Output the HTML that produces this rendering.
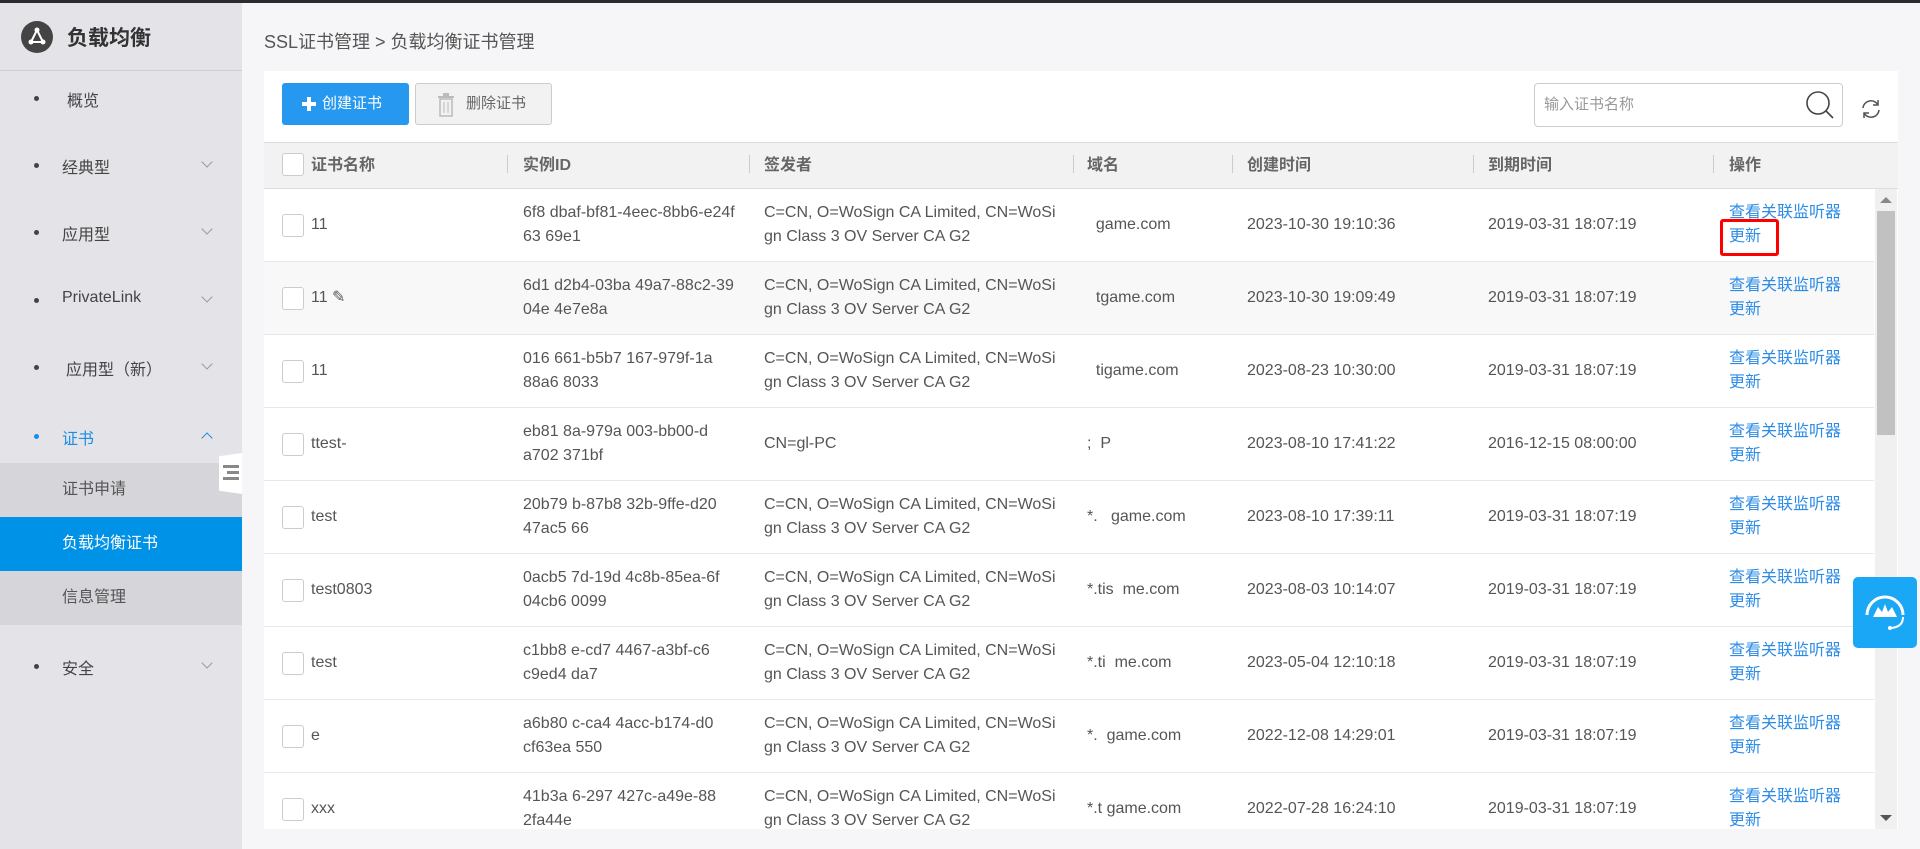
<!DOCTYPE html>
<html><head><meta charset="utf-8"><style>
*{margin:0;padding:0;box-sizing:border-box}
body{width:1920px;height:849px;overflow:hidden;background:#f6f6f8;font-family:"Liberation Sans","Noto Sans CJK SC",sans-serif;color:#555;position:relative}
.topbar{position:absolute;left:0;top:0;width:1920px;height:3px;background:#2b2b30}
.side{position:absolute;left:0;top:3px;width:242px;height:846px;background:#e4e3e8}
.logo{height:68px;border-bottom:1px solid #d0d0d4;display:flex;align-items:center;padding-left:21px;font-size:21px;font-weight:bold;color:#333}
.logo .ic{width:32px;height:32px;border-radius:50%;background:#444;margin-right:14px;position:relative}
.mi{position:absolute;left:0;width:242px;font-size:16px;color:#444}
.mi .dot{position:absolute;left:34px;width:5px;height:5px;border-radius:50%;background:#444;top:-2px}
.mi .t{position:absolute;left:62px;top:-11px}
.mi .ch{position:absolute;left:203px;top:-7px;width:8px;height:8px;border-right:1px solid #999;border-bottom:1px solid #999;transform:rotate(45deg)}
.sub{position:absolute;left:0;width:242px;height:54px;background:#d6d5da;font-size:16px;color:#555;padding-left:62px;line-height:54px}
.crumb{position:absolute;left:264px;top:28px;font-size:18px;color:#555}
.card{position:absolute;left:264px;top:71px;width:1634px;height:758px;background:#fff;overflow:hidden}
.btn1{position:absolute;left:18px;top:12px;width:127px;height:42px;background:#2698f0;border-radius:3px;color:#fff;font-size:15px;line-height:42px;padding-left:40px}
.btn2{position:absolute;left:151px;top:12px;width:137px;height:42px;background:#f2f2f2;border:1px solid #ccc;border-radius:3px;color:#666;font-size:15px;line-height:40px;padding-left:50px}
.search{position:absolute;left:1270px;top:12px;width:309px;height:44px;border:1px solid #ccc;border-radius:4px;font-size:15px;color:#999;line-height:42px;padding-left:9px}
.thead{position:absolute;left:0;top:71px;width:1634px;height:47px;background:#f2f2f2;border-top:1px solid #ddd;border-bottom:1px solid #ddd;font-size:16px;font-weight:bold;color:#666}
.thead span{position:absolute;top:8px}
.thead i{position:absolute;top:12px;width:1px;height:18px;background:#ccc}
.cb{position:absolute;width:22px;height:23px;border:1px solid #ccc;border-radius:3px;background:#fff}
.row{position:absolute;left:0;width:1610px;height:73px;border-bottom:1px solid #e8e8e8;font-size:16px;color:#555}
.row .c{position:absolute;line-height:24px}
.row .a{color:#2d8ce6}
.sb{position:absolute;left:1611px;top:118px;width:22px;height:640px;background:#f0f0f0}
.thumb{position:absolute;left:2px;top:22px;width:18px;height:224px;background:#c1c1c1}
</style></head><body>
<div class="topbar"></div>
<div class="side">
<div class="logo"><div class="ic"><svg width="32" height="32" viewBox="0 0 32 32"><path d="M16 9 L10 21 L22 21 Z" fill="none" stroke="#fff" stroke-width="2"/><circle cx="16" cy="9" r="2.5" fill="#fff"/><circle cx="10" cy="21" r="2.5" fill="#fff"/><circle cx="22" cy="21" r="2.5" fill="#fff"/></svg></div>负载均衡</div>
</div>
<div class="mi" style="top:98px"><div class="dot"></div><div class="t" style="left:67px">概览</div></div>
<div class="mi" style="top:165px"><div class="dot"></div><div class="t">经典型</div><div class="ch"></div></div>
<div class="mi" style="top:232px"><div class="dot"></div><div class="t">应用型</div><div class="ch"></div></div>
<div class="mi" style="top:300px"><div class="dot"></div><div class="t">PrivateLink</div><div class="ch"></div></div>
<div class="mi" style="top:367px"><div class="dot"></div><div class="t" style="left:66px">应用型（新）</div><div class="ch"></div></div>
<div class="mi" style="top:436px;color:#1a8ee6"><div class="dot" style="background:#1a8ee6"></div><div class="t">证书</div><div class="ch" style="transform:rotate(225deg);top:-2px;border-color:#1a8ee6"></div></div>
<div class="sub" style="top:463px">证书申请</div>
<div class="sub" style="top:517px;background:#0092e6;color:#fff">负载均衡证书</div>
<div class="sub" style="top:571px">信息管理</div>
<div class="mi" style="top:666px"><div class="dot"></div><div class="t">安全</div><div class="ch"></div></div>
<div style="position:absolute;left:219px;top:453px;width:23px;height:41px;background:#fff;clip-path:polygon(0 8%,100% 0,100% 100%,0 92%)"><div style="position:absolute;left:4px;top:12px;width:16px;height:3px;background:#888"></div><div style="position:absolute;left:8px;top:18px;width:12px;height:3px;background:#888"></div><div style="position:absolute;left:4px;top:24px;width:16px;height:3px;background:#888"></div></div>
<div class="crumb">SSL证书管理 &gt; 负载均衡证书管理</div>
<div class="card">
<div class="btn1"><span style="position:absolute;left:20px;top:14px;width:14px;height:14px"><span style="position:absolute;left:5px;top:0;width:4px;height:14px;background:#fff"></span><span style="position:absolute;left:0;top:5px;width:14px;height:4px;background:#fff"></span></span>创建证书</div>
<div class="btn2"><svg style="position:absolute;left:21px;top:9px" width="18" height="24" viewBox="0 0 18 24"><rect x="1" y="3" width="16" height="2" fill="#bbb"/><rect x="6" y="0" width="6" height="3" fill="#bbb"/><rect x="3" y="6" width="12" height="17" fill="none" stroke="#bbb" stroke-width="1.5"/><path d="M7 9v11M11 9v11" stroke="#bbb"/></svg>删除证书</div>
<div class="search">输入证书名称<svg style="position:absolute;right:6px;top:5px" width="32" height="32" viewBox="0 0 32 32"><circle cx="14" cy="14" r="11" fill="none" stroke="#444" stroke-width="1.6"/><path d="M22 22l7 7" stroke="#444" stroke-width="1.6"/></svg></div>
<svg style="position:absolute;left:1595px;top:26px" width="24" height="24" viewBox="0 0 24 24"><path d="M4 11a8 8 0 0 1 15-3M20 13a8 8 0 0 1-15 3" fill="none" stroke="#555" stroke-width="1.5"/><path d="M19 3v5h-5M5 21v-5h5" fill="none" stroke="#555" stroke-width="1.5"/></svg>
<div class="thead">
<div class="cb" style="left:18px;top:10px"></div>
<span style="left:47px">证书名称</span><i style="left:243px"></i>
<span style="left:259px">实例ID</span><i style="left:485px"></i>
<span style="left:500px">签发者</span><i style="left:809px"></i>
<span style="left:823px">域名</span><i style="left:968px"></i>
<span style="left:983px">创建时间</span><i style="left:1209px"></i>
<span style="left:1224px">到期时间</span><i style="left:1449px"></i>
<span style="left:1465px">操作</span>
</div>
<div id="rows"></div>
<div class="sb"><div style="position:absolute;left:5px;top:8px;border-left:6px solid transparent;border-right:6px solid transparent;border-bottom:6px solid #888"></div><div class="thumb"></div><div style="position:absolute;left:5px;top:626px;border-left:6px solid transparent;border-right:6px solid transparent;border-top:6px solid #555"></div></div>
</div>
<div style="position:absolute;left:1720px;top:219px;width:59px;height:37px;border:3px solid #f00;border-radius:3px"></div>
<div style="position:absolute;left:1853px;top:577px;width:64px;height:71px;background:#1aa7f5;border-radius:5px"><svg width="64" height="71" viewBox="0 0 64 71"><path d="M14 38a18 18 0 0 1 36 0" fill="none" stroke="#fff" stroke-width="3"/><path d="M20 40l5-10 4 5 3-8 3 8 4-5 5 10z" fill="#fff"/><path d="M50 40q0 10-12 11" fill="none" stroke="#fff" stroke-width="2"/><circle cx="37" cy="51" r="2" fill="#fff"/></svg></div>
<script>
var d=[["11","6f8 dbaf-bf81-4eec-8bb6-e24f","63  69e1","C=CN, O=WoSign CA Limited, CN=WoSi","gn Class 3 OV Server CA G2","  game.com","2023-10-30 19:10:36","2019-03-31 18:07:19"],
["11 ✎","6d1 d2b4-03ba 49a7-88c2-39","04e 4e7e8a","C=CN, O=WoSign CA Limited, CN=WoSi","gn Class 3 OV Server CA G2","  tgame.com","2023-10-30 19:09:49","2019-03-31 18:07:19"],
["11","016 661-b5b7 167-979f-1a","88a6 8033","C=CN, O=WoSign CA Limited, CN=WoSi","gn Class 3 OV Server CA G2","  tigame.com","2023-08-23 10:30:00","2019-03-31 18:07:19"],
["ttest-","eb81 8a-979a 003-bb00-d","a702 371bf","CN=gl-PC","",";  P","2023-08-10 17:41:22","2016-12-15 08:00:00"],
["test","20b79 b-87b8 32b-9ffe-d20","47ac5 66","C=CN, O=WoSign CA Limited, CN=WoSi","gn Class 3 OV Server CA G2","*.   game.com","2023-08-10 17:39:11","2019-03-31 18:07:19"],
["test0803","0acb5 7d-19d 4c8b-85ea-6f","04cb6 0099","C=CN, O=WoSign CA Limited, CN=WoSi","gn Class 3 OV Server CA G2","*.tis  me.com","2023-08-03 10:14:07","2019-03-31 18:07:19"],
["test","c1bb8 e-cd7 4467-a3bf-c6","c9ed4 da7","C=CN, O=WoSign CA Limited, CN=WoSi","gn Class 3 OV Server CA G2","*.ti  me.com","2023-05-04 12:10:18","2019-03-31 18:07:19"],
["e","a6b80 c-ca4 4acc-b174-d0","cf63ea 550","C=CN, O=WoSign CA Limited, CN=WoSi","gn Class 3 OV Server CA G2","*.  game.com","2022-12-08 14:29:01","2019-03-31 18:07:19"],
["xxx","41b3a 6-297 427c-a49e-88","2fa44e ","C=CN, O=WoSign CA Limited, CN=WoSi","gn Class 3 OV Server CA G2","*.t game.com","2022-07-28 16:24:10","2019-03-31 18:07:19"]];
var h="";d.forEach(function(r,i){var t=118+i*73;h+='<div class="row" style="top:'+t+'px;'+(i==1?'background:#f8f8f8':'')+'"><div class="cb" style="left:18px;top:25px"></div><div class="c" style="left:47px;top:24px">'+r[0]+'</div><div class="c" style="left:259px;top:12px">'+r[1]+'<br>'+r[2]+'</div><div class="c" style="left:500px;top:'+(r[4]?12:24)+'px">'+r[3]+(r[4]?'<br>'+r[4]:'')+'</div><div class="c" style="left:823px;top:24px;white-space:pre">'+r[5]+'</div><div class="c" style="left:983px;top:24px">'+r[6]+'</div><div class="c" style="left:1224px;top:24px">'+r[7]+'</div><div class="c a" style="left:1465px;top:12px">查看关联监听器<br>更新</div></div>'});
document.getElementById("rows").innerHTML=h;
</script>
</body></html>
